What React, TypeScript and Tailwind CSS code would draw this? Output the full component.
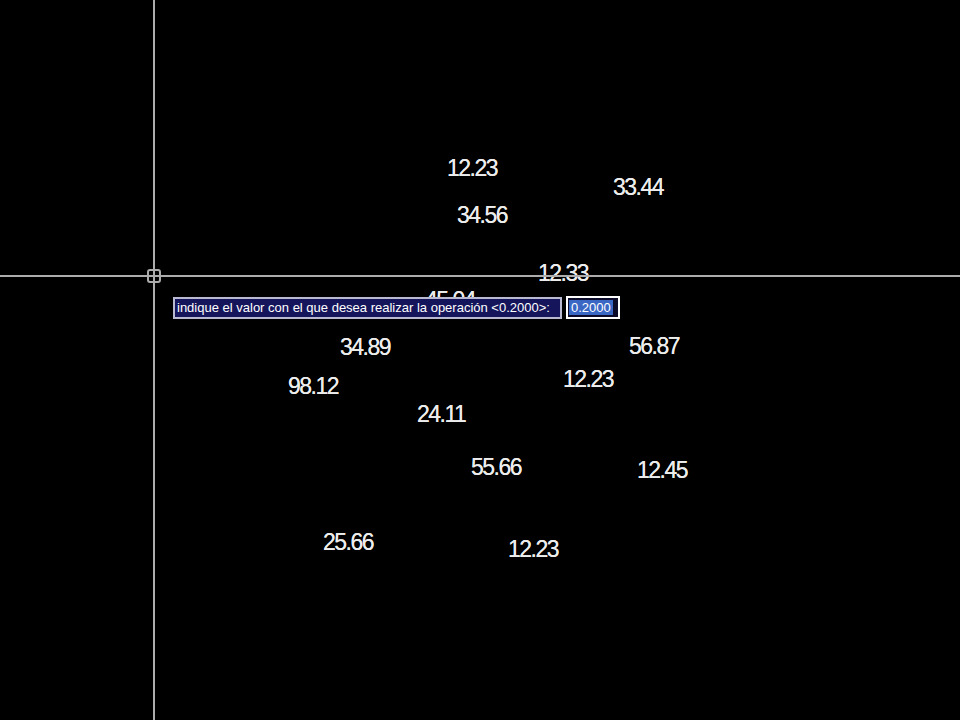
import React from "react";

const labels: { t: string; c: string }[] = [
  { t: "12.23", c: "left-[447px] top-[157px]" },
  { t: "33.44", c: "left-[613px] top-[176px]" },
  { t: "34.56", c: "left-[457px] top-[204px]" },
  { t: "12.33", c: "left-[538px] top-[262px]" },
  { t: "45.04", c: "left-[425px] top-[289px]" },
  { t: "34.89", c: "left-[340px] top-[336px]" },
  { t: "56.87", c: "left-[629px] top-[335px]" },
  { t: "98.12", c: "left-[288px] top-[375px]" },
  { t: "12.23", c: "left-[563px] top-[368px]" },
  { t: "24.11", c: "left-[417px] top-[403px]" },
  { t: "55.66", c: "left-[471px] top-[456px]" },
  { t: "12.45", c: "left-[637px] top-[459px]" },
  { t: "25.66", c: "left-[323px] top-[531px]" },
  { t: "12.23", c: "left-[508px] top-[538px]" },
];

export default function App() {
  return (
    <div className="relative w-[960px] h-[720px] bg-black overflow-hidden font-['Liberation_Sans',Arial,sans-serif]">
      {labels.map((l, i) => (
        <div
          key={i}
          className={`absolute ${l.c} text-[23px] leading-none tracking-[-1.5px] text-[#ececec] whitespace-nowrap [text-shadow:0_0_0.6px_#ececec]`}
        >
          {l.t}
        </div>
      ))}

      {/* crosshair */}
      <div className="absolute left-0 right-0 top-[275px] h-[2px] bg-[#acacac]" />
      <div className="absolute top-0 bottom-0 left-[153px] w-[2px] bg-[#acacac]" />
      <div className="absolute left-[147px] top-[269px] w-[14px] h-[14px] border-2 border-[#acacac] rounded-[3px]" />

      {/* dynamic input prompt */}
      <div className="absolute left-[173px] top-[296px] flex items-center gap-[4px]">
        <div className="h-[22px] w-[389px] border-2 border-[#b9b9d2] bg-[#15155c] flex items-center px-[2px]">
          <span className="text-[13px] leading-none text-white whitespace-nowrap">
            indique el valor con el que desea realizar la operación &lt;0.2000&gt;:
          </span>
        </div>
        <div className="h-[23px] w-[54px] border-2 border-white bg-[#0c0c2a] flex items-center px-[1px]">
          <span className="bg-[#3a66c4] text-[13px] leading-[15px] text-white px-[2px] whitespace-nowrap">
            0.2000
          </span>
        </div>
      </div>
    </div>
  );
}
